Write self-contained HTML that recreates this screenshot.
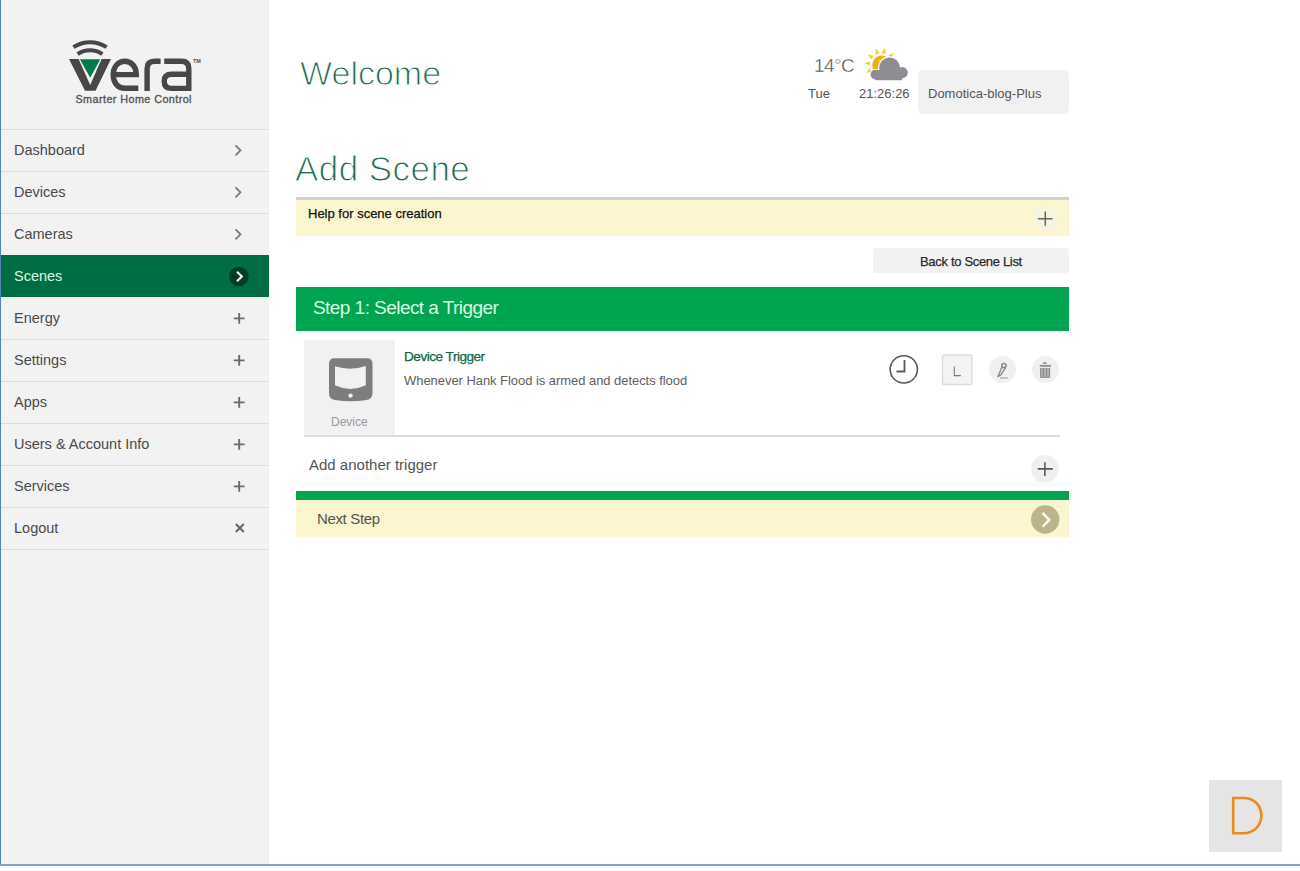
<!DOCTYPE html>
<html><head><meta charset="utf-8">
<style>
*{box-sizing:border-box;margin:0;padding:0}
html,body{width:1300px;height:871px;overflow:hidden;background:#fff;font-family:"Liberation Sans",sans-serif;position:relative}
.abs{position:absolute}
#lb{left:0;top:0;width:1px;height:866px;background:#5385b8}
#bb{left:0;top:864px;width:1300px;height:2px;background:#7ba4cc}
#side{left:1px;top:0;width:268px;height:864px;background:#f2f2f2}
.nav{position:absolute;left:1px;width:268px;height:42px;border-bottom:1px solid #dadada}
.nav{height:42px}
.nav span{position:absolute;left:13px;top:12px;font-size:14.5px;letter-spacing:0px;color:#4a4a4a;white-space:nowrap}
.nav svg{position:absolute;left:0;top:0}
.txt{position:absolute;white-space:nowrap}
</style></head><body>
<div class="abs" id="side"></div>
<div class="abs" id="lb"></div>
<div class="abs" id="bb"></div>

<!-- LOGO -->
<svg class="abs" style="left:0;top:0" width="268" height="128" viewBox="0 0 268 128">
  <g fill="none" stroke="#474747" stroke-width="4">
    <path d="M73.4 47.2 A30 30 0 0 1 106.6 47.2"/>
    <path d="M77.6 54.2 A22 22 0 0 1 102.4 54.2"/>
  </g>
  <polygon points="69,59 111,59 95.5,90.8 85,90.8" fill="#474747"/>
  <polygon points="78.6,59 101.6,59 90.2,85" fill="#f2f2f2"/>
  <polygon points="79.9,59.2 100.3,59.2 90.2,77.8" fill="#007a48"/>
  <g fill="none" stroke="#474747" stroke-width="5.4">
    <path d="M113.2 74.6 H136.3 C136.3 66.5 131.3 61.3 124.8 61.3 C117.9 61.3 113.2 67 113.2 74.8 C113.2 83 118 88.3 125 88.3 H138.3"/>
    <path d="M147.1 91 V69 Q147.1 61.3 154.5 61.3 H160.6"/>
    <path d="M164.2 61.3 H181.5 Q188.8 61.3 188.8 68.5 V91"/>
    <path d="M188.8 74.2 H171.5 Q164.2 74.2 164.2 81.3 Q164.2 88.4 171.5 88.4 H188.8"/>
  </g>
  <text x="193" y="63" font-family="Liberation Sans" font-weight="bold" font-size="5.5" fill="#555">TM</text>
  <text x="75.5" y="103.2" font-family="Liberation Sans" font-size="10.8" fill="#555" stroke="#555" stroke-width="0.35" textLength="116" lengthAdjust="spacing">Smarter Home Control</text>
</svg>

<div class="abs" style="left:1px;top:129px;width:268px;height:1px;background:#dadada"></div>
<div class="nav" style="top:130px"><span>Dashboard</span>
  <svg width="267" height="42"><path d="M234.5 15.3 L239.5 20.3 L234.5 25.3" fill="none" stroke="#7a7a7a" stroke-width="1.8"/></svg></div>
<div class="nav" style="top:172px"><span>Devices</span>
  <svg width="267" height="42"><path d="M234.5 15.3 L239.5 20.3 L234.5 25.3" fill="none" stroke="#7a7a7a" stroke-width="1.8"/></svg></div>
<div class="nav" style="top:214px"><span>Cameras</span>
  <svg width="267" height="42"><path d="M234.5 15.3 L239.5 20.3 L234.5 25.3" fill="none" stroke="#7a7a7a" stroke-width="1.8"/></svg></div>
<div class="nav" style="top:255px;height:42px;background:#016d45;border-bottom:0"><span style="color:#d2fae0;top:13px">Scenes</span>
  <svg width="267" height="42"><circle cx="237.8" cy="21.5" r="9.8" fill="#003f24"/><path d="M236 16.7 L240.8 21.5 L236 26.3" fill="none" stroke="#f2fff6" stroke-width="2.2"/></svg></div>
<div class="nav" style="top:297px;height:43px"><span style="top:13px">Energy</span>
  <svg style="top:1px" width="267" height="42"><path d="M232.8 20.4 H243.6 M238.2 15 V25.8" fill="none" stroke="#6a6a6a" stroke-width="1.9"/></svg></div>
<div class="nav" style="top:340px"><span>Settings</span>
  <svg width="267" height="42"><path d="M232.8 20.4 H243.6 M238.2 15 V25.8" fill="none" stroke="#6a6a6a" stroke-width="1.9"/></svg></div>
<div class="nav" style="top:382px"><span>Apps</span>
  <svg width="267" height="42"><path d="M232.8 20.4 H243.6 M238.2 15 V25.8" fill="none" stroke="#6a6a6a" stroke-width="1.9"/></svg></div>
<div class="nav" style="top:424px"><span>Users &amp; Account Info</span>
  <svg width="267" height="42"><path d="M232.8 20.4 H243.6 M238.2 15 V25.8" fill="none" stroke="#6a6a6a" stroke-width="1.9"/></svg></div>
<div class="nav" style="top:466px"><span>Services</span>
  <svg width="267" height="42"><path d="M232.8 20.4 H243.6 M238.2 15 V25.8" fill="none" stroke="#6a6a6a" stroke-width="1.9"/></svg></div>
<div class="nav" style="top:508px"><span>Logout</span>
  <svg width="267" height="42"><path d="M234.8 16 L242.8 24 M242.8 16 L234.8 24" fill="none" stroke="#6a6a6a" stroke-width="2.2"/></svg></div>

<!-- HEADER -->
<div class="txt" style="left:300px;top:54px;font-size:34px;color:#236a4f;letter-spacing:0px;-webkit-text-stroke:1px #fff">Welcome</div>
<div class="txt" style="left:814px;top:55px;font-size:19px;color:#444;letter-spacing:-0.6px;-webkit-text-stroke:0.4px #fff">14°C</div>
<svg class="abs" style="left:860px;top:44px" width="52" height="40" viewBox="860 44 52 40">
  <g fill="#f3cf38">
    <polygon points="866.1,72.7 872.2,72.1 870.2,68.1"/>
    <polygon points="864.3,63.0 869.7,65.8 870.2,61.4"/>
    <polygon points="867.9,54.1 871.0,59.4 873.8,55.9"/>
    <polygon points="875.6,48.5 875.4,54.7 879.7,53.1"/>
    <polygon points="884.8,47.8 881.5,53.0 885.9,53.9"/>
    <polygon points="893.9,52.8 888.3,55.1 891.4,58.4"/>
  </g>
  <circle cx="881.8" cy="65" r="9.6" fill="#f2ac10"/>
  <g fill="#fff">
    <circle cx="875.4" cy="74.6" r="5.9"/>
    <circle cx="889.6" cy="67.8" r="11.6"/>
  </g>
  <g fill="#8f8d91">
    <circle cx="875.4" cy="74.6" r="4.8"/>
    <circle cx="889.6" cy="67.8" r="10.4"/>
    <circle cx="902.2" cy="72.6" r="5.6"/>
    <rect x="875.4" y="70" width="26.8" height="10.2"/>
  </g>
</svg>
<div class="txt" style="left:808px;top:86px;font-size:13px;color:#555">Tue</div>
<div class="txt" style="left:859px;top:86px;font-size:13px;color:#555">21:26:26</div>
<div class="abs" style="left:918px;top:70px;width:151px;height:44px;background:#f1f1f1;border-radius:6px"></div>
<div class="txt" style="left:928px;top:86px;font-size:13px;color:#555">Domotica-blog-Plus</div>

<!-- ADD SCENE -->
<div class="txt" style="left:295px;top:149px;font-size:35px;color:#236a4f;letter-spacing:0.45px;-webkit-text-stroke:1px #fff">Add Scene</div>
<div class="abs" style="left:296px;top:197px;width:773px;height:3px;background:#d2d1cb"></div>
<div class="abs" style="left:296px;top:200px;width:773px;height:36px;background:#fbf6cf"></div>
<div class="txt" style="left:308px;top:206px;font-size:13px;color:#111;-webkit-text-stroke:0.25px #111;letter-spacing:0px">Help for scene creation</div>
<svg class="abs" style="left:1030px;top:204px" width="30" height="30"><circle cx="15.3" cy="14.7" r="12.5" fill="#f7f4e0"/><path d="M7.8 14.7 H22.6 M15.3 7.6 V21.8" fill="none" stroke="#666" stroke-width="1.5"/></svg>

<div class="abs" style="left:873px;top:248px;width:196px;height:25px;background:#f2f2f2;border-radius:3px"></div>
<div class="txt" style="left:920px;top:254px;font-size:13px;color:#2a2a2a;-webkit-text-stroke:0.25px #2a2a2a;letter-spacing:-0.32px">Back to Scene List</div>

<!-- STEP 1 -->
<div class="abs" style="left:296px;top:287px;width:773px;height:44px;background:#00a551"></div>
<div class="txt" style="left:313px;top:297px;font-size:19px;color:#dcfbe4;letter-spacing:-0.55px">Step 1: Select a Trigger</div>

<div class="abs" style="left:304px;top:340px;width:91px;height:95px;background:#f1f1f1"></div>
<svg class="abs" style="left:304px;top:339px" width="91" height="96" viewBox="304 339 91 96">
  <path d="M334.5 358.3 H367 Q372.5 358.3 372.5 364 V393 Q372.5 399.2 366.5 400 Q350.8 402.6 335 400 Q329 399.2 329 393 V364 Q329 358.3 334.5 358.3 Z" fill="#7d7d7d"/>
  <path d="M335 366.2 Q350.5 371.2 365.8 366 V385.2 Q350.5 392.6 335 385.2 Z" fill="#f1f1f1"/>
  <circle cx="350.5" cy="395.6" r="2.2" fill="#f1f1f1"/>
</svg>
<div class="txt" style="left:331px;top:415px;font-size:12px;color:#9a9a9a">Device</div>
<div class="txt" style="left:404px;top:349px;font-size:13.6px;color:#0f6a45;-webkit-text-stroke:0.25px #0f6a45;letter-spacing:-0.5px">Device Trigger</div>
<div class="txt" style="left:404px;top:373px;font-size:13px;color:#606060;letter-spacing:-0.05px">Whenever Hank Flood is armed and detects flood</div>

<svg class="abs" style="left:880px;top:345px" width="190" height="50" viewBox="880 345 190 50">
  <circle cx="903.8" cy="369.4" r="13.6" fill="none" stroke="#585858" stroke-width="1.6"/>
  <path d="M904.5 360 V371.5 H896.5" fill="none" stroke="#585858" stroke-width="1.8"/>
  <rect x="942.5" y="355" width="29.5" height="29.5" rx="2" fill="#f3f3f3" stroke="#dcdcdc" stroke-width="1.4"/>
  <path d="M954.3 366.5 V375.6 H960.8" fill="none" stroke="#777" stroke-width="1.1"/>
  <circle cx="1002.5" cy="369.6" r="13.5" fill="#f0f0f0"/>
  <circle cx="1003.9" cy="365.6" r="2.2" fill="none" stroke="#858585" stroke-width="1.5"/>
  <path d="M1001.9 367.2 L997.9 376.6 L1000.6 375.2 L1005.6 367.8" fill="none" stroke="#858585" stroke-width="1.3" stroke-linejoin="round"/>
  <path d="M1000 378 H1007.8" stroke="#aaa" stroke-width="1.3"/>
  <circle cx="1045.4" cy="369.6" r="13.5" fill="#f0f0f0"/>
  <rect x="1043" y="362.2" width="3.6" height="1.8" fill="#9a9a9a"/>
  <rect x="1039.7" y="364.9" width="11.3" height="1.9" fill="#8f8f8f"/>
  <rect x="1040.2" y="367.9" width="9.9" height="9.9" fill="#b4b4b4"/>
  <path d="M1040.8 367.9 V377.3 H1049.5 V367.9 M1043.5 367.9 V376.5 M1046.5 367.9 V376.5" fill="none" stroke="#8a8a8a" stroke-width="1.1"/>
</svg>

<div class="abs" style="left:304px;top:435px;width:756px;height:2px;background:#dcdcdc"></div>

<div class="txt" style="left:309px;top:456px;font-size:15px;color:#555">Add another trigger</div>
<svg class="abs" style="left:1030px;top:454px" width="30" height="30"><circle cx="14.9" cy="14.9" r="13.9" fill="#f0f0f0"/><path d="M7.7 14.9 H22.8 M14.9 8.2 V22" fill="none" stroke="#5a5a5a" stroke-width="1.6"/></svg>

<div class="abs" style="left:296px;top:491px;width:773px;height:9px;background:#00a551"></div>
<div class="abs" style="left:296px;top:500px;width:773px;height:37px;background:#fbf6cf"></div>
<div class="txt" style="left:317px;top:510px;font-size:15px;color:#555;letter-spacing:-0.35px">Next Step</div>
<svg class="abs" style="left:1030px;top:505px" width="30" height="30"><circle cx="15.2" cy="14.5" r="14.2" fill="#bab58a"/><path d="M12.5 7.9 L19.3 14.9 L12.5 21.7" fill="none" stroke="#fffdf0" stroke-width="2.4"/></svg>

<!-- D box -->
<div class="abs" style="left:1209px;top:780px;width:73px;height:72px;background:#e5e5e5"></div>
<svg class="abs" style="left:1209px;top:780px" width="73" height="72" viewBox="1209 780 73 72">
  <path d="M1233.2 798 H1243.5 C1254 798 1261.3 805.5 1261.3 815.5 C1261.3 825.5 1254 833.2 1243.5 833.2 H1233.2 Z" fill="none" stroke="#ec8a1c" stroke-width="2.6"/>
</svg>
</body></html>
